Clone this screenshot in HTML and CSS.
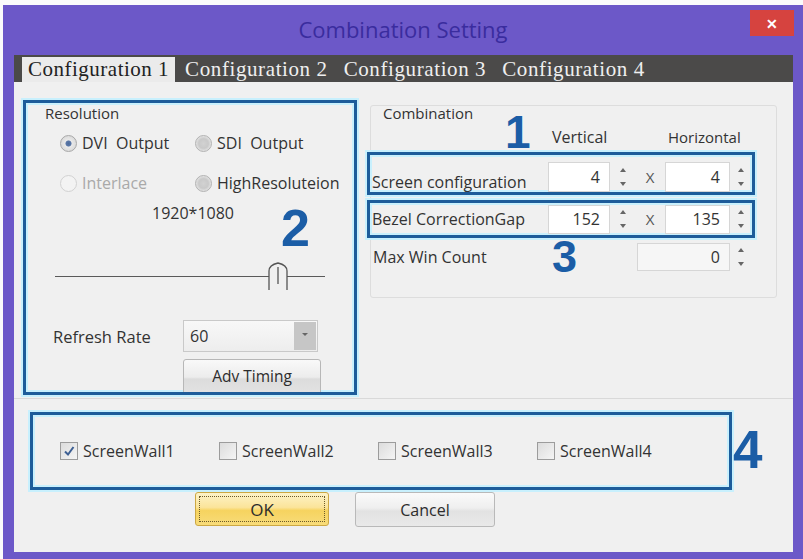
FILE: index.html
```html
<!DOCTYPE html>
<html>
<head>
<meta charset="utf-8">
<title>Combination Setting</title>
<link rel="stylesheet" href="styles.css">
</head>
<body>
<div class="window">
  <div class="titlebar">
    <div class="title">Combination Setting</div>
    <div class="close">✕</div>
  </div>
  <div class="client">
    <div class="tabs">
      <div class="tab active">Configuration 1</div>
      <div class="tab">Configuration 2</div>
      <div class="tab">Configuration 3</div>
      <div class="tab">Configuration 4</div>
    </div>
    <div class="page">
      <div class="top">
        <div class="resolution hl">
          <div class="group-label">Resolution</div>
          <div class="radios">
            <label class="radio"><span class="dot on"></span>DVI&nbsp; Output</label>
            <label class="radio"><span class="dot shaded"></span>SDI&nbsp; Output</label>
            <label class="radio disabled"><span class="dot off"></span>Interlace</label>
            <label class="radio"><span class="dot shaded"></span>HighResoluteion</label>
          </div>
          <div class="res-value">1920*1080</div>
          <svg class="slider" width="270" height="30" viewBox="0 0 270 30">
            <line x1="0" y1="14.5" x2="270" y2="14.5" stroke="#5a5a5a" stroke-width="1"/>
            <path d="M214 28 V9 Q214 3 223 1 Q232 3 232 9 V28" fill="#f0f0f0" stroke="#555" stroke-width="1.3"/>
            <line x1="223" y1="5" x2="223" y2="22" stroke="#555" stroke-width="1.3"/>
          </svg>
          <div class="refresh">
            <span class="refresh-label">Refresh Rate</span>
            <div class="select"><span>60</span><span class="drop"><span class="tri-down"></span></span></div>
          </div>
          <div class="adv">Adv Timing</div>
          <span class="mark mark2">2</span>
        </div>
        <div class="combo">
          <div class="group-label combo-label">Combination</div>
          <div class="heads"><span class="head-v">Vertical</span><span>Horizontal</span></div>
          <div class="row hl row1">
            <span class="row-label">Screen configuration</span>
            <span class="num">4</span><span class="spin"><i class="up"></i><i class="down"></i></span>
            <span class="times">X</span>
            <span class="num num2">4</span><span class="spin spin2"><i class="up"></i><i class="down"></i></span>
          </div>
          <div class="row hl row3">
            <span class="row-label">Bezel CorrectionGap</span>
            <span class="num">152</span><span class="spin"><i class="up"></i><i class="down"></i></span>
            <span class="times">X</span>
            <span class="num num2">135</span><span class="spin spin2"><i class="up"></i><i class="down"></i></span>
          </div>
          <div class="row rowmax">
            <span class="row-label max-label">Max Win Count</span>
            <span class="num numwide">0</span><span class="spin spin2"><i class="up"></i><i class="down"></i></span>
          </div>
          <span class="mark mark1">1</span>
          <span class="mark mark3">3</span>
        </div>
      </div>
      <div class="bottom">
        <div class="walls hl">
          <label class="check-item"><span class="box checked"><svg width="14" height="14" viewBox="0 0 14 14"><path d="M3 7.5 L6 10.5 L11.5 3" fill="none" stroke="#3d5f93" stroke-width="2"/></svg></span>ScreenWall1</label>
          <label class="check-item"><span class="box"></span>ScreenWall2</label>
          <label class="check-item"><span class="box"></span>ScreenWall3</label>
          <label class="check-item"><span class="box"></span>ScreenWall4</label>
          <span class="mark mark4">4</span>
        </div>
        <div class="buttons">
          <div class="btn ok"><span class="focus">OK</span></div>
          <div class="btn cancel">Cancel</div>
        </div>
      </div>
    </div>
  </div>
</div>
</body>
</html>
```

FILE: styles.css
```css
* { box-sizing: border-box; }
body {
  margin: 0;
  background: #fbfbfb;
  font-family: "Open Sans", "Noto Sans", sans-serif;
  color: #2e2e2e;
  overflow: hidden;
}
.window {
  margin: 5px 0 0 3px;
  width: 800px;
  height: 554px;
  background: #6c58c8;
  display: flex;
  flex-direction: column;
}
.titlebar {
  height: 50px;
  flex: none;
  display: grid;
  grid-template-columns: 1fr auto 1fr;
  align-items: start;
}
.title {
  grid-column: 2;
  margin-top: 9px;
  font-size: 22px;
  line-height: 30px;
  color: #3a2c9e;
}
.close {
  grid-column: 3;
  justify-self: end;
  margin: 5px 9px 0 0;
  width: 44px;
  height: 26px;
  background: #d6433f;
  color: #fff;
  font-size: 14px;
  font-weight: bold;
  display: flex;
  align-items: center;
  justify-content: center;
}
.client {
  flex: 1;
  margin: 0 10px 7px 11px;
  display: flex;
  flex-direction: column;
}
.tabs {
  height: 27px;
  flex: none;
  background: #4b4a49;
  display: flex;
  align-items: flex-end;
  padding-left: 8px;
}
.tab {
  font-family: "Liberation Serif", "Times New Roman", serif;
  font-size: 21px;
  letter-spacing: 0.6px;
  line-height: 25px;
  height: 25px;
  color: #efefef;
  padding: 0 8px;
  white-space: nowrap;
}
.tab.active {
  background: #ebebeb;
  color: #222;
  letter-spacing: 0.5px;
  padding: 0 6px;
  margin-right: 2px;
}
.page {
  flex: 1;
  background: #f0f0f0;
  display: flex;
  flex-direction: column;
}
.top {
  height: 317px;
  flex: none;
  display: flex;
  align-items: flex-start;
  border-bottom: 1px solid #d9d9d9;
}
.hl {
  border: 3px solid #1d5c9a;
  box-shadow: 0 0 0 2px #c8f0fd, inset 0 0 0 2px #c8f0fd;
}
.mark {
  position: absolute;
  font-family: "Liberation Sans", Arial, sans-serif;
  font-weight: bold;
  line-height: 1;
  color: #1b5da6;
}
/* resolution group */
.resolution {
  position: relative;
  margin: 18px 0 0 9px;
  width: 334px;
  height: 295px;
  flex: none;
  overflow: hidden;
  display: flex;
  flex-direction: column;
}
.resolution > * { flex-shrink: 0; }
.group-label {
  font-size: 15px;
  line-height: 18px;
  color: #333;
  padding-left: 19px;
  margin-top: 1px;
}
.radios {
  display: grid;
  grid-template-columns: 135px auto;
  row-gap: 16px;
  padding-left: 34px;
  margin-top: 9px;
}
.radio {
  display: flex;
  align-items: center;
  height: 24px;
  font-size: 16px;
  color: #333;
  white-space: nowrap;
}
.radio.disabled { color: #a9a9a9; }
.dot {
  width: 17px;
  height: 17px;
  border-radius: 50%;
  margin-right: 5px;
  flex: none;
  border: 1px solid #a8a8a8;
  background: radial-gradient(circle, #f4f4f4 0, #e2e2e2 70%);
}
.dot.on {
  background: radial-gradient(circle, #4e6c9c 0, #5b78a8 25%, #e9e9e9 32%, #dcdcdc 70%);
}
.dot.shaded {
  background: radial-gradient(circle, #d2d2d2 0, #c9c9c9 45%, #e6e6e6 75%);
  border-color: #b2b2b2;
}
.dot.off {
  background: #f3f3f3;
  border-color: #d2d2d2;
}
.res-value {
  font-size: 16px;
  line-height: 18px;
  padding-left: 126px;
  margin-top: 9px;
  color: #333;
}
.slider {
  display: block;
  margin: 40px 0 0 29px;
}
.refresh {
  display: flex;
  align-items: center;
  margin-top: 28px;
  padding-left: 27px;
}
.refresh-label {
  width: 130px;
  font-size: 16.5px;
  color: #333;
}
.select {
  width: 135px;
  height: 32px;
  border: 1px solid #c9c9c9;
  background: linear-gradient(#f8f8f8, #ededed);
  display: flex;
  align-items: center;
  padding-left: 6px;
  font-size: 16px;
  color: #333;
}
.drop {
  margin: 0 1px 0 auto;
  width: 22px;
  height: 28px;
  background: #c6c6c6;
  display: flex;
  justify-content: center;
  padding-top: 11px;
}
.tri-down {
  width: 0;
  height: 0;
  border-left: 3px solid transparent;
  border-right: 3px solid transparent;
  border-top: 3px solid #666;
}
.adv {
  margin: 7px 0 0 157px;
  width: 138px;
  height: 40px;
  border: 1px solid #b7b7b7;
  border-radius: 3px;
  background: linear-gradient(#f9f9f9, #ececec 45%, #dcdcdc 50%, #e4e4e4);
  text-align: center;
  font-size: 15.5px;
  line-height: 18px;
  padding-top: 7px;
  color: #2c2c2c;
}
.mark2 { font-size: 52px; left: 255px; top: 99px; }
/* combination group */
.combo {
  position: relative;
  margin: 23px 0 0 13px;
  width: 407px;
  height: 193px;
  flex: none;
  border: 1px solid #dddddd;
  border-radius: 3px;
  display: flex;
  flex-direction: column;
}
.combo > * { flex-shrink: 0; }
.combo-label {
  padding-left: 12px;
  margin-top: -2px;
}
.heads {
  display: flex;
  font-size: 15px;
  line-height: 18px;
  color: #333;
  padding-left: 181px;
  margin-top: 6px;
}
.head-v { width: 116px; font-size: 16px; }
.row {
  display: flex;
  color: #333;
}
.row1 {
  margin: 6px 0 0 -4px;
  width: 388px;
  height: 43px;
  align-items: flex-end;
}
.row3 {
  margin: 5px 0 0 -4px;
  width: 388px;
  height: 38px;
  align-items: center;
}
.rowmax {
  margin-top: 5px;
  height: 28px;
  align-items: center;
}
.row-label {
  width: 178px;
  padding-left: 2px;
  font-size: 16px;
  line-height: 20px;
  white-space: nowrap;
  align-self: center;
}
.row1 .row-label { align-self: flex-end; }
.max-label { width: 266px; }
.num {
  width: 62px;
  height: 30px;
  background: #fff;
  border: 1px solid #d6d6d6;
  text-align: right;
  padding-right: 9px;
  font-size: 16px;
  line-height: 28px;
  color: #333;
}
.row3 .num { height: 29px; line-height: 27px; }
.num2 { width: 65px; }
.numwide {
  width: 93px;
  height: 28px;
  line-height: 26px;
  background: #f6f6f6;
}
.spin {
  width: 14px;
  height: 26px;
  margin-left: 6px;
  display: flex;
  flex-direction: column;
  align-items: center;
  justify-content: space-between;
  padding: 4px 0;
  align-self: center;
}
.spin2 { margin-left: 4px; }
.row1 .spin { align-self: flex-end; margin-bottom: 2px; }
.spin i {
  display: block;
  width: 0;
  height: 0;
  border-left: 3px solid transparent;
  border-right: 3px solid transparent;
}
.spin .up { border-bottom: 4px solid #666; }
.spin .down { border-top: 4px solid #666; }
.times {
  width: 35px;
  padding-left: 5px;
  text-align: center;
  font-size: 15px;
  line-height: 30px;
  color: #555;
  align-self: center;
}
.row1 .times { align-self: flex-end; }
.mark1 { font-size: 46px; left: 134px; top: 3px; }
.mark3 { font-size: 45px; left: 181px; top: 128px; }
/* bottom */
.bottom {
  flex: 1;
  display: flex;
  flex-direction: column;
}
.walls {
  position: relative;
  margin: 13px 0 0 16px;
  width: 702px;
  height: 78px;
  flex: none;
  display: flex;
  align-items: center;
  padding-left: 27px;
}
.check-item {
  width: 159px;
  display: flex;
  align-items: center;
  font-size: 16px;
  color: #333;
}
.box {
  width: 18px;
  height: 18px;
  border: 1px solid #9c9c9c;
  background: linear-gradient(135deg, #dcdcdc, #f5f5f5);
  margin-right: 5px;
  display: flex;
  align-items: center;
  justify-content: center;
  flex: none;
}
.mark4 { font-size: 53px; left: 700px; top: 8px; }
.buttons {
  display: flex;
  align-items: flex-start;
  margin: 2px 0 0 181px;
  gap: 26px;
}
.btn {
  height: 34px;
  border-radius: 3px;
  font-size: 16px;
  color: #2c2c2c;
  display: flex;
  align-items: center;
  justify-content: center;
}
.ok {
  width: 134px;
  border: 1px solid #cda842;
  background: linear-gradient(#fdf3c8, #fbe49a 45%, #f6d35f 55%, #f8dc7a);
  padding: 3px;
  font-size: 17px;
}
.focus {
  flex: 1;
  align-self: stretch;
  border: 1px dotted #6b5a2a;
  display: flex;
  align-items: center;
  justify-content: center;
}
.cancel {
  width: 140px;
  height: 35px;
  border: 1px solid #b9b9b9;
  background: linear-gradient(#fafafa, #efefef 45%, #e2e2e2 55%, #e9e9e9);
}
```
